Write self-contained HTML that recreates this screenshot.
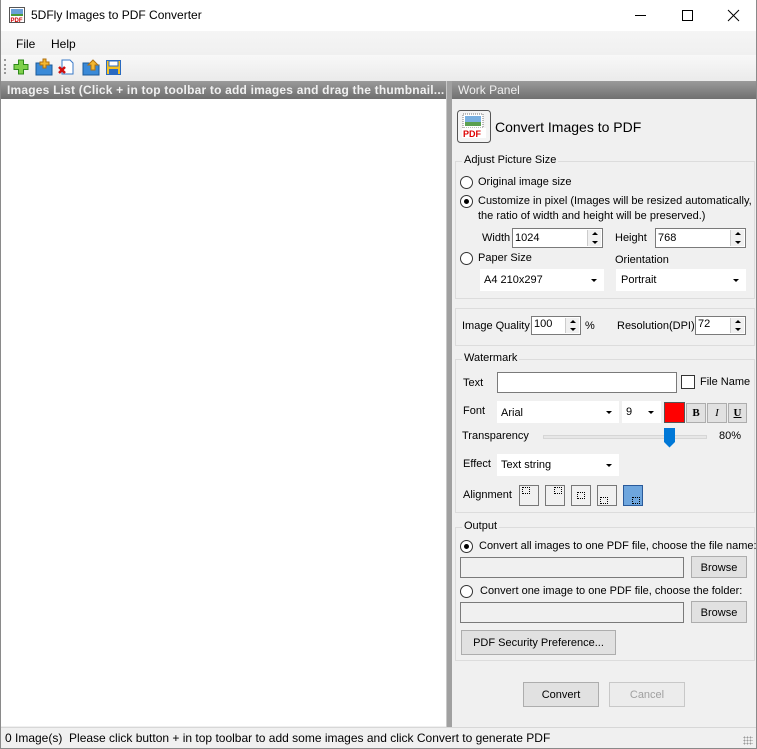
<!DOCTYPE html>
<html><head><meta charset="utf-8"><style>
*{box-sizing:border-box;margin:0;padding:0}
body{width:757px;height:749px;position:relative;overflow:hidden;background:#f0f0f0;font-family:"Liberation Sans",Arial,sans-serif;font-size:12px;color:#000}
.a{position:absolute;white-space:nowrap}
.p .a,.p .btn,.p .sel,.p .in,.p .lbl{font-size:11px}
.in{position:absolute;background:#fff;border:1px solid #7a7a7a}
.sel{position:absolute;background:#fff}
.sel:after{content:"";position:absolute;right:7px;top:50%;margin-top:-1px;border:3px solid transparent;border-top:3px solid #000}
.spin{position:absolute;right:1px;top:1px;bottom:1px;width:14px;border-left:1px solid #ccc;background:#f0f0f0}
.spin:before{content:"";position:absolute;left:4px;top:2px;border:3px solid transparent;border-bottom:3px solid #000;border-top:0}
.spin:after{content:"";position:absolute;left:4px;bottom:2px;border:3px solid transparent;border-top:3px solid #000;border-bottom:0}
.grp{position:absolute;border:1px solid #dcdcdc}
.lbl{position:absolute;background:#f0f0f0;padding:0 2px;top:-8px;left:6px;white-space:nowrap}
.rad{position:absolute;width:13px;height:13px;border:1px solid #333;border-radius:50%;background:#fff}
.rad.on:after{content:"";position:absolute;left:3px;top:3px;width:5px;height:5px;border-radius:50%;background:#000}
.btn{position:absolute;border:1px solid #adadad;background:#e1e1e1;text-align:center}
.al{position:absolute;width:20px;height:21px;border:1px solid #777;background:#f0f0f0}
.al i{position:absolute;width:8px;height:7px;border:1px dotted #000}
</style></head><body>
<div class="a" style="left:0;top:0;width:757px;height:749px;border:1px solid #8a8a8a;border-top:none;"></div>
<div class="a" style="left:1px;top:0;width:755px;height:31px;background:#fff"></div>
<svg class="a" style="left:9px;top:7px" width="17" height="17"><rect x="0.5" y="0.5" width="15" height="15" fill="#fff" stroke="#555"/><rect x="2" y="2" width="12" height="7" fill="#6aa0d8"/><rect x="2" y="7" width="12" height="2" fill="#4a9a3a"/><text x="1.5" y="15" font-size="6" font-weight="bold" fill="#c00" font-family="Liberation Sans">PDF</text></svg>
<div class="a" style="left:31px;top:8px;font-size:12px">5DFly Images to PDF Converter</div>
<div class="a" style="left:635px;top:15px;width:11px;height:1px;background:#000"></div>
<div class="a" style="left:682px;top:10px;width:11px;height:11px;border:1px solid #000"></div>
<svg class="a" style="left:727px;top:9px" width="13" height="13"><path d="M1 1L12 12M12 1L1 12" stroke="#000" stroke-width="1"/></svg>
<div class="a" style="left:1px;top:31px;width:755px;height:24px;background:linear-gradient(#f5f5f5,#f0f0f0)"></div>
<div class="a" style="left:16px;top:37px">File</div>
<div class="a" style="left:51px;top:37px">Help</div>
<div class="a" style="left:1px;top:55px;width:755px;height:26px;background:linear-gradient(#f8f8f8,#ebebeb)"></div>
<div class="a" style="left:4px;top:59px;width:2px;height:15px;border-left:2px dotted #999"></div>
<svg class="a" style="left:13px;top:59px" width="16" height="16"><path d="M5.5 1h5v4.5H15v5h-4.5V15h-5v-4.5H1v-5h4.5z" fill="#7ed04b" stroke="#2e8a1a"/></svg>
<svg class="a" style="left:35px;top:58px" width="18" height="18"><path d="M1 5h6l1 2h9v10H1z" fill="#3a8ad8" stroke="#1a5a9a"/><path d="M8 1h3v3h3v3h-3v3H8V7H5V4h3z" fill="#f5b830" stroke="#b07010"/></svg>
<svg class="a" style="left:58px;top:59px" width="16" height="16"><path d="M4 1h8l3 3v11H4z" fill="#fff" stroke="#3a7ac8"/><path d="M1 8l6 6M7 8l-6 6" stroke="#d01010" stroke-width="2.5"/></svg>
<svg class="a" style="left:82px;top:58px" width="18" height="18"><path d="M1 5h6l1 2h9v10H1z" fill="#3a8ad8" stroke="#1a5a9a"/><path d="M11 2l5 5h-3v5h-4V7H6z" fill="#f5b830" stroke="#b07010"/></svg>
<svg class="a" style="left:106px;top:60px" width="15" height="15"><rect x="0.5" y="0.5" width="14" height="14" fill="#f5c020" stroke="#2a6ac0"/><rect x="3" y="1" width="9" height="5" fill="#fff" stroke="#2a6ac0"/><rect x="3" y="9" width="9" height="5" fill="#2a6ac0"/></svg>
<div class="a" style="left:1px;top:81px;width:445px;height:18px;background:linear-gradient(#9a9a9a,#6e6e6e);color:#f0f0f0;font-weight:bold;padding:2px 0 0 6px;font-size:12px;letter-spacing:0.2px;overflow:hidden">Images List (Click + in top toolbar to add images and drag the thumbnail...</div>
<div class="a" style="left:452px;top:81px;width:304px;height:18px;background:linear-gradient(#9a9a9a,#707070);color:#f0f0f0;padding:2px 0 0 6px">Work Panel</div>
<div class="a" style="left:1px;top:99px;width:445px;height:627px;background:#fff"></div>
<div class="a" style="left:446px;top:81px;width:6px;height:646px;background:#a0a0a0;border-left:1px solid #c8c8c8"></div>
<div class="p">
<svg class="a" style="left:457px;top:110px" width="34" height="33"><rect x="0.5" y="0.5" width="33" height="32" rx="3" fill="#f4f4f4" stroke="#555"/><rect x="6" y="4" width="20" height="14" fill="#fff" stroke="#777" stroke-dasharray="1 1"/><rect x="8" y="6" width="16" height="10" fill="#7ab0e0"/><rect x="8" y="12" width="16" height="4" fill="#5aa050"/><rect x="5" y="18" width="24" height="10" fill="#fff"/><text x="6" y="27" font-size="9" font-weight="bold" fill="#d00" font-family="Liberation Sans">PDF</text></svg>
<div class="a" style="left:495px;top:119px;font-size:14px">Convert Images to PDF</div>

<div class="grp" style="left:455px;top:161px;width:300px;height:138px"><div class="lbl">Adjust Picture Size</div></div>
<div class="rad" style="left:460px;top:176px"></div><div class="a" style="left:478px;top:176px">Original image size</div>
<div class="rad on" style="left:460px;top:195px"></div><div class="a" style="left:478px;top:195px">Customize in pixel (Images will be resized automatically,</div>
<div class="a" style="left:478px;top:210px">the ratio of width and height will be preserved.)</div>
<div class="a" style="left:482px;top:232px">Width</div>
<div class="in" style="left:512px;top:228px;width:91px;height:20px;padding:3px 0 0 2px">1024<div class="spin"></div></div>
<div class="a" style="left:615px;top:232px">Height</div>
<div class="in" style="left:655px;top:228px;width:91px;height:20px;padding:3px 0 0 2px">768<div class="spin"></div></div>
<div class="rad" style="left:460px;top:252px"></div><div class="a" style="left:478px;top:252px">Paper Size</div>
<div class="a" style="left:615px;top:254px">Orientation</div>
<div class="sel" style="left:480px;top:269px;width:124px;height:22px;padding:5px 0 0 4px">A4 210x297</div>
<div class="sel" style="left:616px;top:269px;width:130px;height:22px;padding:5px 0 0 5px">Portrait</div>

<div class="grp" style="left:455px;top:308px;width:300px;height:38px"></div>
<div class="a" style="left:462px;top:320px">Image Quality</div>
<div class="in" style="left:531px;top:316px;width:50px;height:19px;padding:1px 0 0 2px">100<div class="spin"></div></div>
<div class="a" style="left:585px;top:320px">%</div>
<div class="a" style="left:617px;top:320px">Resolution(DPI)</div>
<div class="in" style="left:695px;top:316px;width:51px;height:19px;padding:1px 0 0 2px">72<div class="spin"></div></div>

<div class="grp" style="left:455px;top:359px;width:300px;height:154px"><div class="lbl">Watermark</div></div>
<div class="a" style="left:463px;top:377px">Text</div>
<div class="in" style="left:497px;top:372px;width:180px;height:21px"></div>
<div class="a" style="left:681px;top:375px;width:14px;height:14px;border:1px solid #333;background:#fff"></div>
<div class="a" style="left:700px;top:376px">File Name</div>
<div class="a" style="left:463px;top:405px">Font</div>
<div class="sel" style="left:497px;top:401px;width:122px;height:22px;padding:6px 0 0 4px">Arial</div>
<div class="sel" style="left:622px;top:401px;width:39px;height:22px;padding:5px 0 0 4px">9</div>
<div class="a" style="left:664px;top:402px;width:21px;height:21px;background:#f00;border:1px solid #555"></div>
<div class="btn" style="left:686px;top:403px;width:20px;height:20px;font-family:'Liberation Serif';font-weight:bold;padding-top:3px">B</div>
<div class="btn" style="left:707px;top:403px;width:20px;height:20px;font-family:'Liberation Serif';font-style:italic;padding-top:3px">I</div>
<div class="btn" style="left:728px;top:403px;width:19px;height:20px;font-family:'Liberation Serif';font-weight:bold;text-decoration:underline;padding-top:3px">U</div>
<div class="a" style="left:462px;top:430px">Transparency</div>
<div class="a" style="left:543px;top:435px;width:164px;height:4px;background:#e7e7e7;border:1px solid #d6d6d6"></div>
<svg class="a" style="left:664px;top:428px" width="12" height="20"><path d="M0 0h11v14l-5.5 5.5L0 14z" fill="#0078d7"/></svg>
<div class="a" style="left:719px;top:430px">80%</div>
<div class="a" style="left:463px;top:458px">Effect</div>
<div class="sel" style="left:497px;top:454px;width:122px;height:22px;padding:5px 0 0 4px">Text string</div>
<div class="a" style="left:463px;top:489px">Alignment</div>
<div class="al" style="left:519px;top:485px"><i style="left:2px;top:1px"></i></div>
<div class="al" style="left:545px;top:485px"><i style="left:8px;top:1px"></i></div>
<div class="al" style="left:571px;top:485px"><i style="left:5px;top:6px"></i></div>
<div class="al" style="left:597px;top:485px"><i style="left:2px;top:11px"></i></div>
<div class="al" style="left:623px;top:485px;background:#6ea6de;border-color:#2a5a9a"><i style="left:8px;top:11px"></i></div>

<div class="grp" style="left:455px;top:527px;width:300px;height:134px"><div class="lbl">Output</div></div>
<div class="rad on" style="left:460px;top:540px"></div><div class="a" style="left:479px;top:540px">Convert all images to one PDF file, choose the file name:</div>
<div class="in" style="left:460px;top:557px;width:224px;height:21px;background:#f0f0f0"></div>
<div class="btn" style="left:691px;top:556px;width:56px;height:22px;padding-top:5px">Browse</div>
<div class="rad" style="left:460px;top:585px"></div><div class="a" style="left:480px;top:585px">Convert one image to one PDF file, choose the folder:</div>
<div class="in" style="left:460px;top:602px;width:224px;height:21px;background:#f0f0f0"></div>
<div class="btn" style="left:691px;top:601px;width:56px;height:22px;padding-top:5px">Browse</div>
<div class="btn" style="left:461px;top:630px;width:155px;height:25px;padding-top:6px">PDF Security Preference...</div>

<div class="btn" style="left:523px;top:682px;width:76px;height:25px;padding-top:6px">Convert</div>
<div class="btn" style="left:609px;top:682px;width:76px;height:25px;padding-top:6px;color:#a0a0a0;border-color:#c8c8c8;background:#ececec">Cancel</div>
</div>
<div class="a" style="left:1px;top:727px;width:755px;height:21px;background:#f0f0f0;border-top:1px solid #d7d7d7"></div>
<div class="a" style="left:5px;top:731px">0 Image(s)&nbsp; Please click button + in top toolbar to add some images and click Convert to generate PDF</div>
<div class="a" style="left:743px;top:736px;width:10px;height:9px;background:radial-gradient(circle,#999 0.8px,transparent 1px) 0 0/3px 3px"></div>
</body></html>
